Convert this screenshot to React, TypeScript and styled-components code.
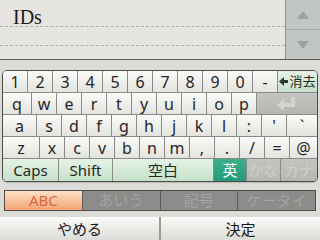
import styled, { createGlobalStyle } from "styled-components"

const Global = createGlobalStyle`
body {
  margin: 0;
  background: #dcdcd8;
  font-family: "Noto Sans", "Noto Sans CJK JP", sans-serif;
}
`

type Kind = "normal" | "green" | "active" | "off"

const rows: [string, number, Kind?][][] = [
  [
    ["1", 25], ["2", 25], ["3", 25], ["4", 25], ["5", 25], ["6", 25],
    ["7", 25], ["8", 25], ["9", 25], ["0", 25], ["-", 25],
  ],
  [
    ["q", 29], ["w", 25], ["e", 25], ["r", 25], ["t", 25], ["y", 25],
    ["u", 25], ["i", 25], ["o", 25], ["p", 25],
  ],
  [
    ["a", 34], ["s", 25], ["d", 25], ["f", 25], ["g", 25], ["h", 25],
    ["j", 25], ["k", 25], ["l", 25], [":", 25], ["'", 25], ["`", 30],
  ],
  [
    ["z", 37], ["x", 25], ["c", 25], ["v", 25], ["b", 25], ["n", 25],
    ["m", 25], [",", 25], [".", 25], ["/", 25], ["=", 25], ["@", 27],
  ],
  [
    ["Caps", 56, "green"], ["Shift", 54, "green"], ["空白", 101, "green"],
    ["英", 33, "active"], ["かな", 34, "off"], ["カナ", 36, "off"],
  ],
]

const App = () => {
  return (
    <Screen>
      <Global />
      <TextArea>
        <Lines>
          <Line>IDs</Line>
          <Line />
          <Line $last />
        </Lines>
        <Scroll>
          <ScrollBtn>
            <svg width="12" height="8" viewBox="0 0 12 8">
              <polygon points="6,0 12,8 0,8" fill="#9da29d" />
            </svg>
          </ScrollBtn>
          <ScrollBtn $last>
            <svg width="12" height="8" viewBox="0 0 12 8">
              <polygon points="0,0 12,0 6,8" fill="#9da29d" />
            </svg>
          </ScrollBtn>
        </Scroll>
      </TextArea>

      <Keyboard>
        {rows.map((row, r) => (
          <Row key={r}>
            {row.map(([label, w, kind]) => (
              <Key key={label} $w={w} $kind={kind || "normal"} $size={r === 4 ? 15 : 16}>
                {label}
              </Key>
            ))}
            {r === 0 && (
              <Key $w={39} $kind="green" $size={13}>
                <svg width="9" height="9" viewBox="0 0 9 9">
                  <polygon points="0,4.5 5,0 5,9" fill="#2a3a2e" />
                  <rect x="4" y="3" width="5" height="3" fill="#2a3a2e" />
                </svg>
                消去
              </Key>
            )}
            {r === 1 && (
              <Key $w={60} $kind="off">
                <svg width="22" height="16" viewBox="0 0 22 16">
                  <path d="M17 1 V9 H7" stroke="#d3d5d2" strokeWidth="4" fill="none" />
                  <polygon points="1,9 8,3 8,15" fill="#d3d5d2" />
                </svg>
              </Key>
            )}
          </Row>
        ))}
      </Keyboard>

      <ModeBar>
        <Mode $on>ABC</Mode>
        <Mode>あいう</Mode>
        <Mode>記号</Mode>
        <Mode $last>ケータイ</Mode>
      </ModeBar>

      <Footer>
        <FootBtn>やめる</FootBtn>
        <FootBtn $right>決定</FootBtn>
      </Footer>
    </Screen>
  )
}

export default App

const Screen = styled.div`
width: 320px;
height: 240px;
overflow: hidden;
display: flex;
flex-direction: column;
background: #dcdcd8;
`
const TextArea = styled.div`
height: 59px;
display: flex;
background: #e7e5e1;
border-bottom: 1px solid #5a5a58;
`
const Lines = styled.div`
flex: 1;
padding-top: 9px;
`
const Line = styled.div<{ $last?: boolean }>`
height: 17px;
margin-bottom: ${p => (p.$last ? 0 : "1px")};
border-bottom: ${p => (p.$last ? "none" : "1px dashed #b0b0ac")};
padding-left: 13px;
font-family: "Liberation Serif", serif;
font-size: 20px;
line-height: 16px;
color: #1a1a1a;
`
const Scroll = styled.div`
width: 34px;
display: flex;
flex-direction: column;
background: #c2c6c2;
border-left: 1px solid #8e928e;
`
const ScrollBtn = styled.div<{ $last?: boolean }>`
flex: 1;
display: flex;
align-items: center;
justify-content: center;
border-bottom: ${p => (p.$last ? "none" : "1px solid #a4a8a4")};
`
const Keyboard = styled.div`
margin: 10px 0 0 2px;
width: 314px;
border: 1px solid #4c4c4a;
border-radius: 5px;
overflow: hidden;
background: #f0f0ee;
box-shadow: 0 1px 1px #b8b8b4;
`
const Row = styled.div`
display: flex;
height: 22px;
`
const kindBg: Record<Kind, string> = {
  normal: "linear-gradient(#fbfbf9, #e3e3df)",
  green: "linear-gradient(#e6f3e6, #c5e0ca)",
  active: "linear-gradient(#3db08a, #22997a)",
  off: "linear-gradient(#c3c5c1, #b4b6b2)",
}
const kindColor: Record<Kind, string> = {
  normal: "#262626",
  green: "#1e2a22",
  active: "#ffffff",
  off: "#cfd1ce",
}
const Key = styled.div<{ $w: number; $kind: Kind; $size?: number }>`
box-sizing: border-box;
width: ${p => p.$w}px;
flex: none;
display: flex;
align-items: center;
justify-content: center;
gap: 1px;
border-right: 1px solid #8a8a88;
border-bottom: 1px solid #8a8a88;
background: ${p => kindBg[p.$kind]};
color: ${p => kindColor[p.$kind]};
font-size: ${p => p.$size || 16}px;
line-height: 1;
&:last-child {
  border-right: none;
}
${Row}:last-child & {
  border-bottom: none;
}
`
const ModeBar = styled.div`
margin: 8px 0 0 4px;
width: 310px;
height: 19px;
display: flex;
border: 1px solid #4c4c4a;
background: #8a8a88;
`
const Mode = styled.div<{ $on?: boolean; $last?: boolean }>`
flex: 1;
display: flex;
align-items: center;
justify-content: center;
border-right: ${p => (p.$last ? "none" : "1px solid #5c5c5a")};
background: ${p => (p.$on ? "linear-gradient(#fde0c8, #f4a474)" : "#8c8c8a")};
color: ${p => (p.$on ? "#d9683a" : "#a4a4a2")};
font-size: 15px;
line-height: 1;
`
const Footer = styled.div`
margin-top: 6px;
flex: 1;
display: flex;
gap: 2px;
background: #9a9a96;
`
const FootBtn = styled.div<{ $right?: boolean }>`
flex: 1;
display: flex;
align-items: center;
justify-content: center;
background: linear-gradient(#fbfbf9, #dcdcd8);
color: #1a1a1a;
font-size: 15px;
`
